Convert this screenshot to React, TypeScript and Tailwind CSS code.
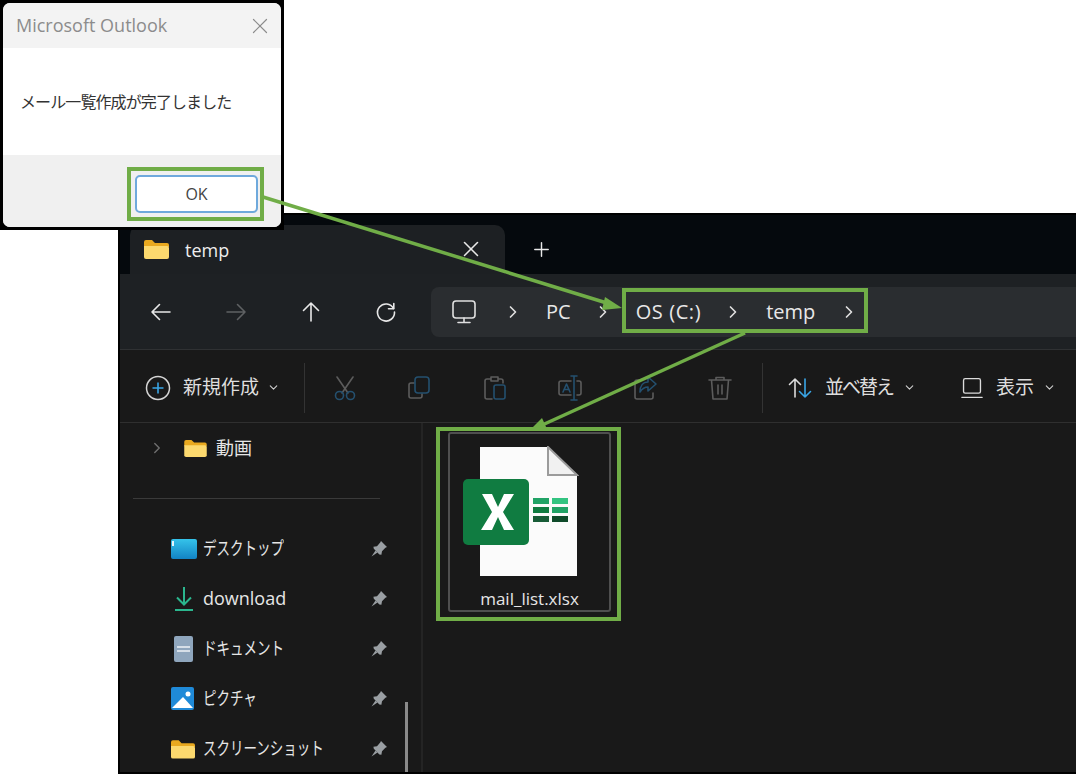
import type { ReactNode } from "react"
import { ChevronDown, ChevronRight, Plus, X } from "lucide-react"

const ui = "font-['Open_Sans','Noto_Sans_CJK_JP',sans-serif]"

function FolderIcon({ className }: { className: string }) {
  return (
    <svg viewBox="0 0 25 20" className={className}>
      <path d="M0 3a2 2 0 0 1 2-2h6l3 3h12a2 2 0 0 1 2 2v2H0z" fill="#e9a91f" />
      <path d="M0 7h23a2 2 0 0 1 2 2v9a2 2 0 0 1-2 2H2a2 2 0 0 1-2-2z" fill="#fcd96e" />
    </svg>
  )
}

function Stroke({ children, size = 26 }: { children: ReactNode; size?: number }) {
  return (
    <svg viewBox="0 0 26 26" width={size} height={size} fill="none" strokeWidth="1.6" strokeLinecap="round" strokeLinejoin="round">
      {children}
    </svg>
  )
}

function NavButton({ children }: { children: ReactNode }) {
  return <div className="flex w-[75px] shrink-0 items-center justify-center">{children}</div>
}

function ToolIcon({ children }: { children: ReactNode }) {
  return <div className="flex w-[75px] shrink-0 items-center justify-center">{children}</div>
}

function Crumb({ label, className }: { label: string; className: string }) {
  return <span className={`text-[20px] leading-none text-[#e8e8e8] ${className}`}>{label}</span>
}

function CrumbArrow({ className }: { className: string }) {
  return <ChevronRight className={`h-[20px] w-[20px] text-[#e0e0e0] ${className}`} strokeWidth={2} />
}

function PinIcon() {
  return (
    <svg viewBox="0 0 18 18" className="h-[18px] w-[18px]">
      <path d="M11 1l6 6-1.6.8-3.4 3.4-.6 3.600-2-.4-5.600-5.600-.4-2 3.600-.6L10.200 2.600z" fill="#9a9fa3" />
      <path d="M5.500 10.500L1.500 16.500l6-4z" fill="#9a9fa3" />
    </svg>
  )
}

function QuickRow({ icon, label, narrow = true }: { icon: ReactNode; label: string; narrow?: boolean }) {
  return (
    <div className="flex h-[50px] items-center">
      <div className="flex w-[33px] shrink-0 items-center pl-[1px]">{icon}</div>
      <div className="w-[167px] shrink-0 whitespace-nowrap">
        {narrow ? (
          <span className="inline-block origin-left scale-x-[0.75] text-[18px] leading-none text-[#e6e6e6]">{label}</span>
        ) : (
          <span className="text-[18px] leading-none text-[#e6e6e6]">{label}</span>
        )}
      </div>
      <PinIcon />
    </div>
  )
}

function ExcelIcon() {
  return (
    <svg viewBox="0 0 116 132" className="h-[132px] w-[116px]">
      <path d="M17 1h68l29 29v100H17z" fill="#fbfbfb" />
      <path d="M85 1v28h29z" fill="#f1f1f1" stroke="#9b9b9b" strokeWidth="2" />
      <rect x="0" y="33" width="66" height="66" rx="5" fill="#107c41" />
      <path d="M19 48h10l6 13 6-13h10L40 66l11 18H41l-6-13-6 13H18l11-18z" fill="#ffffff" />
      <rect x="70" y="52" width="16" height="6" fill="#21a366" />
      <rect x="89" y="52" width="16" height="6" fill="#33c481" />
      <rect x="70" y="61" width="16" height="6" fill="#107c41" />
      <rect x="89" y="61" width="16" height="6" fill="#21a366" />
      <rect x="70" y="70" width="16" height="6" fill="#185c37" />
      <rect x="89" y="70" width="16" height="6" fill="#0f4a2a" />
    </svg>
  )
}

function Dialog() {
  return (
    <div className="absolute left-0 top-0 z-10 h-[230px] w-[284px] bg-black p-[3px]">
      <div className="flex h-full flex-col overflow-hidden rounded-[7px] bg-white">
        <div className="flex h-[45px] items-center justify-between bg-[#f3f3f3] pl-[13px] pr-[8px]">
          <span className="text-[18px] text-[#8c8c8c]">Microsoft Outlook</span>
          <X className="h-[26px] w-[26px] text-[#8c8c8c]" strokeWidth={1.1} />
        </div>
        <div className="flex h-[107px] items-center pl-[17px] text-[16px] tracking-[-0.9px] text-[#333333]">
          メール一覧作成が完了しました
        </div>
        <div className="flex flex-1 items-start justify-end bg-[#f0f0f0] pr-[23px] pt-[20px]">
          <div className="flex h-[38px] w-[123px] items-center justify-center rounded-[5px] border-2 border-[#6fa9dc] bg-white text-[16px] font-medium text-[#444444]">
            OK
          </div>
        </div>
      </div>
    </div>
  )
}

function Explorer() {
  return (
    <div className="ml-[118px] flex h-[561px] w-[958px] flex-col overflow-hidden border-l-2 border-t-2 border-b-2 border-black">
      <div className="flex h-[59px] shrink-0 items-end bg-[#05090d] pl-[10px]">
        <div className="flex h-[49px] w-[375px] items-center rounded-t-[10px] bg-[#1d2023] pb-[2px] pl-[14px] pr-[21px]">
          <FolderIcon className="h-[20px] w-[25px]" />
          <span className="ml-[16px] mt-[4px] text-[18px] font-medium text-[#eeeeee]">temp</span>
          <X className="ml-auto h-[26px] w-[26px] text-[#e8e8e8]" strokeWidth={1.4} />
        </div>
        <div className="flex h-[49px] items-center pl-[25px]">
          <Plus className="h-[23px] w-[23px] text-[#e8e8e8]" strokeWidth={1.5} />
        </div>
      </div>

      <div className="flex h-[76px] shrink-0 items-center border-b border-[#2f3133] bg-[#1e2124] pl-[3px]">
        <NavButton>
          <Stroke><path d="M22 13H4M11.500 5.500L4 13l7.500 7.500" stroke="#e8e8e8" /></Stroke>
        </NavButton>
        <NavButton>
          <Stroke><path d="M4 13h18M14.500 5.500L22 13l-7.500 7.500" stroke="#5f6163" /></Stroke>
        </NavButton>
        <NavButton>
          <Stroke><path d="M13 22V4M5.500 11.500L13 4l7.500 7.500" stroke="#e8e8e8" /></Stroke>
        </NavButton>
        <NavButton>
          <Stroke>
            <path d="M20.500 9.500A8.500 8.500 0 1 0 21.500 13" stroke="#e8e8e8" />
            <path d="M20.800 4.500v5.300h-5.300" stroke="#e8e8e8" />
          </Stroke>
        </NavButton>
        <div className="ml-[8px] flex h-[50px] flex-1 items-center rounded-l-[8px] bg-[#2a2d30] pl-[20px]">
          <Stroke>
            <rect x="2" y="2" width="22" height="17" rx="3" stroke="#e0e0e0" />
            <path d="M13 19v4M7 23.500h12" stroke="#e0e0e0" />
          </Stroke>
          <CrumbArrow className="ml-[26px]" />
          <Crumb label="PC" className="ml-[23px]" />
          <CrumbArrow className="ml-[22px]" />
          <Crumb label="OS (C:)" className="ml-[23px] tracking-[0.6px]" />
          <CrumbArrow className="ml-[22px]" />
          <Crumb label="temp" className="ml-[23px]" />
          <CrumbArrow className="ml-[24px]" />
        </div>
      </div>

      <div className="flex h-[73px] shrink-0 items-center border-b border-[#2f2f2f] bg-[#191919] pl-[25px] pt-[3px]">
        <svg viewBox="0 0 26 26" className="h-[26px] w-[26px]" fill="none">
          <circle cx="13" cy="13" r="11.500" stroke="#d5d5d5" strokeWidth="1.500" />
          <path d="M13 7.500v11M7.500 13h11" stroke="#3aa6e6" strokeWidth="1.600" />
        </svg>
        <span className="ml-[12px] text-[19px] leading-none text-[#dedede]">新規作成</span>
        <ChevronDown className="ml-[8px] h-[13px] w-[13px] text-[#cfcfcf]" strokeWidth={2} />
        <div className="ml-[24px] h-[50px] w-px bg-[#333333]" />
        <div className="ml-[2px] flex">
          <ToolIcon>
            <Stroke>
              <path d="M5 2l11 16M21 2L10 18" stroke="#5c5c5c" />
              <circle cx="7.500" cy="20.500" r="4" stroke="#24506f" />
              <circle cx="18.500" cy="20.500" r="4" stroke="#24506f" />
            </Stroke>
          </ToolIcon>
          <ToolIcon>
            <Stroke>
              <path d="M7 8H4a2 2 0 0 0-2 2v11a2 2 0 0 0 2 2h9a2 2 0 0 0 2-2v-2" stroke="#5c5c5c" />
              <rect x="8" y="2" width="14" height="16" rx="3" stroke="#24506f" />
            </Stroke>
          </ToolIcon>
          <ToolIcon>
            <Stroke>
              <path d="M9 4H5a2 2 0 0 0-2 2v16a2 2 0 0 0 2 2h5M9 2h7v4H9zM16 4h3a2 2 0 0 1 2 2v2" stroke="#5c5c5c" />
              <rect x="12" y="10" width="11" height="14" rx="2" stroke="#24506f" />
            </Stroke>
          </ToolIcon>
          <ToolIcon>
            <Stroke>
              <path d="M14 6H4a2 2 0 0 0-2 2v10a2 2 0 0 0 2 2h10M20 6h2a2 2 0 0 1 2 2v10a2 2 0 0 1-2 2h-2" stroke="#5c5c5c" />
              <path d="M17 1v24M14 1h6M14 25h6M6 17l3.500-8 3.500 8M7.200 14.500h4.600" stroke="#24506f" />
            </Stroke>
          </ToolIcon>
          <ToolIcon>
            <Stroke>
              <path d="M10 5H5a2 2 0 0 0-2 2v15a2 2 0 0 0 2 2h14a2 2 0 0 0 2-2v-4" stroke="#5c5c5c" />
              <path d="M16 2l8 7-8 7v-4c-4 0-6 2-8 5 0-6 3-10 8-10z" stroke="#24506f" />
            </Stroke>
          </ToolIcon>
          <ToolIcon>
            <Stroke>
              <path d="M2 5h22M9 5V2.500h8V5M4.500 5l1.500 19h14l1.500-19M11 10v9M15 10v9" stroke="#5c5c5c" />
            </Stroke>
          </ToolIcon>
        </div>
        <div className="ml-[5px] h-[50px] w-px bg-[#333333]" />
        <div className="ml-[24px] flex items-center">
          <Stroke>
            <path d="M8 22V4M2.500 9.500L8 4l5.500 5.500" stroke="#dcdcdc" />
            <path d="M18 4v18M12.500 16.500L18 22l5.500-5.500" stroke="#3aa6e6" />
          </Stroke>
        </div>
        <span className="ml-[12px] text-[19px] leading-none tracking-[-2px] text-[#dedede]">並べ替え</span>
        <ChevronDown className="ml-[10px] h-[13px] w-[13px] text-[#cfcfcf]" strokeWidth={2} />
        <div className="ml-[45px] flex items-center">
          <Stroke size={22}>
            <rect x="3" y="2" width="20" height="17" rx="2" stroke="#dcdcdc" />
            <path d="M1 24h24" stroke="#dcdcdc" />
          </Stroke>
        </div>
        <span className="ml-[13px] text-[19px] leading-none text-[#dedede]">表示</span>
        <ChevronDown className="ml-[9px] h-[13px] w-[13px] text-[#cfcfcf]" strokeWidth={2} />
      </div>

      <div className="flex flex-1 bg-[#191919]">
        <div className="relative w-[303px] shrink-0 border-r-[2px] border-[#242424] pl-[13px]">
          <div className="flex h-[50px] items-center pl-[15px]">
            <ChevronRight className="h-[18px] w-[18px] text-[#707070]" strokeWidth={1.8} />
            <FolderIcon className="ml-[18px] h-[18px] w-[23px]" />
            <span className="ml-[9px] text-[18px] leading-none text-[#e6e6e6]">動画</span>
          </div>
          <div className="mt-[25px] h-px w-[247px] bg-[#3a3a3a]" />
          <div className="pl-[37px] pt-[25px]">
            <QuickRow
              label="デスクトップ"
              icon={
                <svg viewBox="0 0 26 22" className="h-[22px] w-[26px]">
                  <defs>
                    <linearGradient id="desk" x1="0" y1="0" x2="0" y2="1">
                      <stop offset="0" stopColor="#35c3ea" />
                      <stop offset="1" stopColor="#1283c4" />
                    </linearGradient>
                  </defs>
                  <rect width="26" height="20" y="1" rx="2" fill="url(#desk)" />
                  <rect x="1" y="3" width="2" height="5" fill="#e6f6fc" />
                </svg>
              }
            />
            <QuickRow
              label="download"
              narrow={false}
              icon={
                <svg viewBox="0 0 20 26" className="ml-[3px] h-[26px] w-[20px]" fill="none" stroke="#2bb68e" strokeWidth="2">
                  <path d="M10 1v17M3 11.500l7 7 7-7M1 24h18" />
                </svg>
              }
            />
            <QuickRow
              label="ドキュメント"
              icon={
                <svg viewBox="0 0 20 26" className="ml-[3px] h-[26px] w-[20px]">
                  <rect width="19" height="26" rx="2" fill="#8fa6bd" />
                  <path d="M3 11h13M3 15h13" stroke="#eef2f6" strokeWidth="1.500" />
                </svg>
              }
            />
            <QuickRow
              label="ピクチャ"
              icon={
                <svg viewBox="0 0 24 24" className="h-[24px] w-[24px]">
                  <rect width="23" height="23" rx="2" fill="#1f8ad8" />
                  <circle cx="17" cy="7" r="2.500" fill="#ffffff" />
                  <path d="M1 21l11-11 10 11z" fill="#ffffff" />
                </svg>
              }
            />
            <QuickRow label="スクリーンショット" icon={<FolderIcon className="h-[20px] w-[24px]" />} />
          </div>
          <div className="absolute right-[13px] top-[279px] h-[71px] w-[3px] bg-[#8a8a8a]" />
        </div>
        <div className="pl-[25px] pt-[9px]">
          <div className="flex h-[180px] w-[163px] flex-col items-center rounded-[3px] border-2 border-[#4f4f4f] pt-[12px]">
            <div className="-ml-[17px]">
              <ExcelIcon />
            </div>
            <span className="mt-[12px] text-[17px] leading-none text-[#e6e6e6]">mail_list.xlsx</span>
          </div>
        </div>
      </div>
    </div>
  )
}

function Annotations() {
  return (
    <>
      <div className="absolute left-[127px] top-[167px] z-20 h-[54px] w-[137px] border-[4px] border-[#70ad47]" />
      <div className="absolute left-[622px] top-[288px] z-20 h-[45px] w-[246px] border-[4px] border-[#70ad47]" />
      <div className="absolute left-[436px] top-[427px] z-20 h-[194px] w-[185px] border-[4px] border-[#70ad47]" />
      <svg viewBox="0 0 1076 774" className="pointer-events-none absolute left-0 top-0 z-20 h-[774px] w-[1076px]">
        <path d="M263 197L610 304" stroke="#70ad47" strokeWidth="3.500" />
        <path d="M622 308l-17-11-3 13z" fill="#70ad47" />
        <path d="M745 333L540 426" stroke="#70ad47" strokeWidth="3.500" />
        <path d="M530 430l12-12 5 11z" fill="#70ad47" />
      </svg>
    </>
  )
}

export default function App() {
  return (
    <div className={`relative h-[774px] w-[1076px] overflow-hidden bg-white pt-[213px] ${ui}`}>
      <Explorer />
      <Dialog />
      <Annotations />
    </div>
  )
}
